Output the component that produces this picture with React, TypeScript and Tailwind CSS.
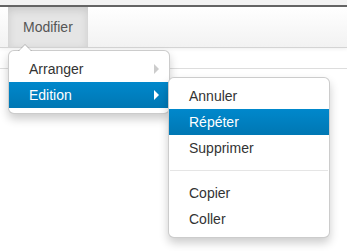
const font = { fontFamily: '"Liberation Sans", Arial, sans-serif' };

function Item({ label, active, submenu }: { label: string; active?: boolean; submenu?: boolean }) {
  return (
    <div
      className={`relative flex h-[26px] items-center justify-between pl-[20px] pr-[10px] text-[14px] leading-[20px] ${
        active ? "bg-gradient-to-b from-[#0088cc] to-[#0077b3] text-white" : "text-[#333333]"
      }`}
    >
      <span>{label}</span>
      {submenu && (
        <span
          className={`h-0 w-0 border-y-[5px] border-l-[5px] border-y-transparent ${
            active ? "border-l-white" : "border-l-[#cccccc]"
          }`}
        />
      )}
    </div>
  );
}

function Menu({ children, className }: { children: React.ReactNode; className: string }) {
  return (
    <div
      className={`absolute w-[162px] rounded-[6px] border border-black/20 bg-white py-[5px] shadow-[0_5px_10px_rgba(0,0,0,0.2)] ${className}`}
    >
      {children}
    </div>
  );
}

export default function App() {
  return (
    <div className="relative h-[251px] w-[347px] overflow-hidden bg-white" style={font}>
      <div className="h-[5px] bg-[#f3f3f3]" />
      <div className="h-[2px] bg-[#666666]" />
      <div className="flex h-[41px] border-b border-[#d4d4d4] bg-gradient-to-b from-white to-[#f2f2f2] pl-[8px] shadow-[0_1px_4px_rgba(0,0,0,0.065)]">
        <div className="flex h-[40px] items-center bg-[#e5e5e5] px-[15px] text-[14px] text-[#555555] shadow-[inset_0_3px_8px_rgba(0,0,0,0.125)]">
          Modifier
        </div>
      </div>
      <div className="h-[21px] border-b border-[#dddddd]" />

      {/* first dropdown */}
      <Menu className="left-[8px] top-[50px]">
        <span className="absolute left-[9px] top-[-7px] h-0 w-0 border-x-[7px] border-b-[7px] border-x-transparent border-b-black/20" />
        <span className="absolute left-[10px] top-[-6px] h-0 w-0 border-x-[6px] border-b-[6px] border-x-transparent border-b-white" />
        <Item label="Arranger" submenu />
        <Item label="Edition" active submenu />
      </Menu>

      {/* submenu */}
      <Menu className="left-[168px] top-[77px]">
        <Item label="Annuler" />
        <Item label="Répéter" active />
        <Item label="Supprimer" />
        <div className="mx-px my-[9px] h-px bg-[#e5e5e5]" />
        <Item label="Copier" />
        <Item label="Coller" />
      </Menu>
    </div>
  );
}
